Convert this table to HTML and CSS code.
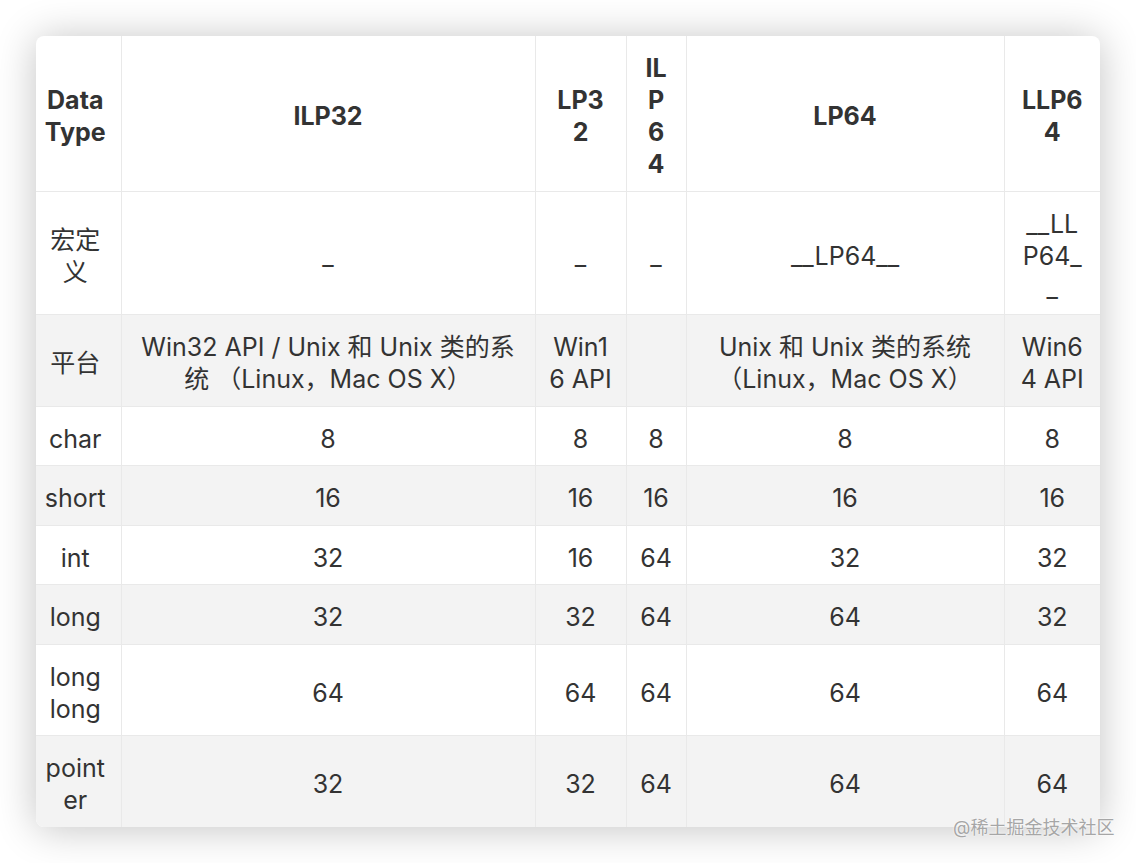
FILE: index.html
```html
<!DOCTYPE html>
<html lang="zh-CN">
<head>
<meta charset="utf-8">
<title>Data Models</title>
<link rel="stylesheet" href="styles.css">
</head>
<body>
<main class="page">
  <div class="card">
    <table class="dt">
      <colgroup>
        <col class="c-type">
        <col class="c-ilp32">
        <col class="c-lp32">
        <col class="c-ilp64">
        <col class="c-lp64">
        <col class="c-llp64">
      </colgroup>
      <thead>
        <tr>
          <th>Data<br>Type</th>
          <th>ILP32</th>
          <th>LP3<br>2</th>
          <th>IL<br>P<br>6<br>4</th>
          <th>LP64</th>
          <th>LLP6<br>4</th>
        </tr>
      </thead>
      <tbody>
        <tr>
          <td>宏定<br>义</td>
          <td>_</td>
          <td>_</td>
          <td>_</td>
          <td>__LP64__</td>
          <td>__LL<br>P64_<br>_</td>
        </tr>
        <tr>
          <td>平台</td>
          <td>Win32 API / Unix 和 Unix 类的系<br>统 （Linux，Mac OS X）</td>
          <td>Win1<br>6 API</td>
          <td></td>
          <td>Unix 和 Unix 类的系统<br>（Linux，Mac OS X）</td>
          <td>Win6<br>4 API</td>
        </tr>
        <tr><td>char</td><td>8</td><td>8</td><td>8</td><td>8</td><td>8</td></tr>
        <tr><td>short</td><td>16</td><td>16</td><td>16</td><td>16</td><td>16</td></tr>
        <tr><td>int</td><td>32</td><td>16</td><td>64</td><td>32</td><td>32</td></tr>
        <tr><td>long</td><td>32</td><td>32</td><td>64</td><td>64</td><td>32</td></tr>
        <tr><td>long<br>long</td><td>64</td><td>64</td><td>64</td><td>64</td><td>64</td></tr>
        <tr><td>point<br>er</td><td>32</td><td>32</td><td>64</td><td>64</td><td>64</td></tr>
      </tbody>
    </table>
  </div>
  <div class="watermark">@稀土掘金技术社区</div>
</main>
</body>
</html>
```

FILE: styles.css
```css
html, body {
  margin: 0;
  padding: 0;
  background: #ffffff;
}

body {
  font-family: Inter, "Noto Sans CJK SC", sans-serif;
  color: #333333;
}

.page {
  position: relative;
  padding: 36px;
  width: 1064px;
}

.card {
  width: 1064px;
  background: #ffffff;
  border-radius: 8px;
  overflow: hidden;
  box-shadow: 0 2px 40px rgba(0, 0, 0, 0.24);
}

.dt {
  width: 100%;
  border-collapse: collapse;
  table-layout: fixed;
}

.c-type { width: 85px; }
.c-ilp32 { width: 414px; }
.c-lp32 { width: 91px; }
.c-ilp64 { width: 60px; }
.c-lp64 { width: 318px; }
.c-llp64 { width: 96px; }

.dt th,
.dt td {
  padding: 16.25px 4px 10.25px;
  font-size: 25px;
  line-height: 32px;
  text-align: center;
  vertical-align: middle;
  white-space: nowrap;
  border: 1px solid #e9e9e9;
}

.dt th {
  font-weight: 700;
}

.dt td {
  font-weight: 400;
}

.dt tr > :first-child {
  border-left: none;
  padding-left: 2px;
  padding-right: 8px;
}
.dt tr > :last-child { border-right: none; }
.dt thead tr > * { border-top: none; }
.dt tbody tr:last-child > * { border-bottom: none; }

.dt tbody tr:nth-child(even) {
  background: #f3f3f3;
}

.watermark {
  position: absolute;
  left: 953px;
  top: 815px;
  font-size: 18px;
  line-height: 26px;
  color: #a6a6a6;
  text-shadow: 0 0 2px #ffffff, 0 0 1px #ffffff;
  white-space: nowrap;
}
```
